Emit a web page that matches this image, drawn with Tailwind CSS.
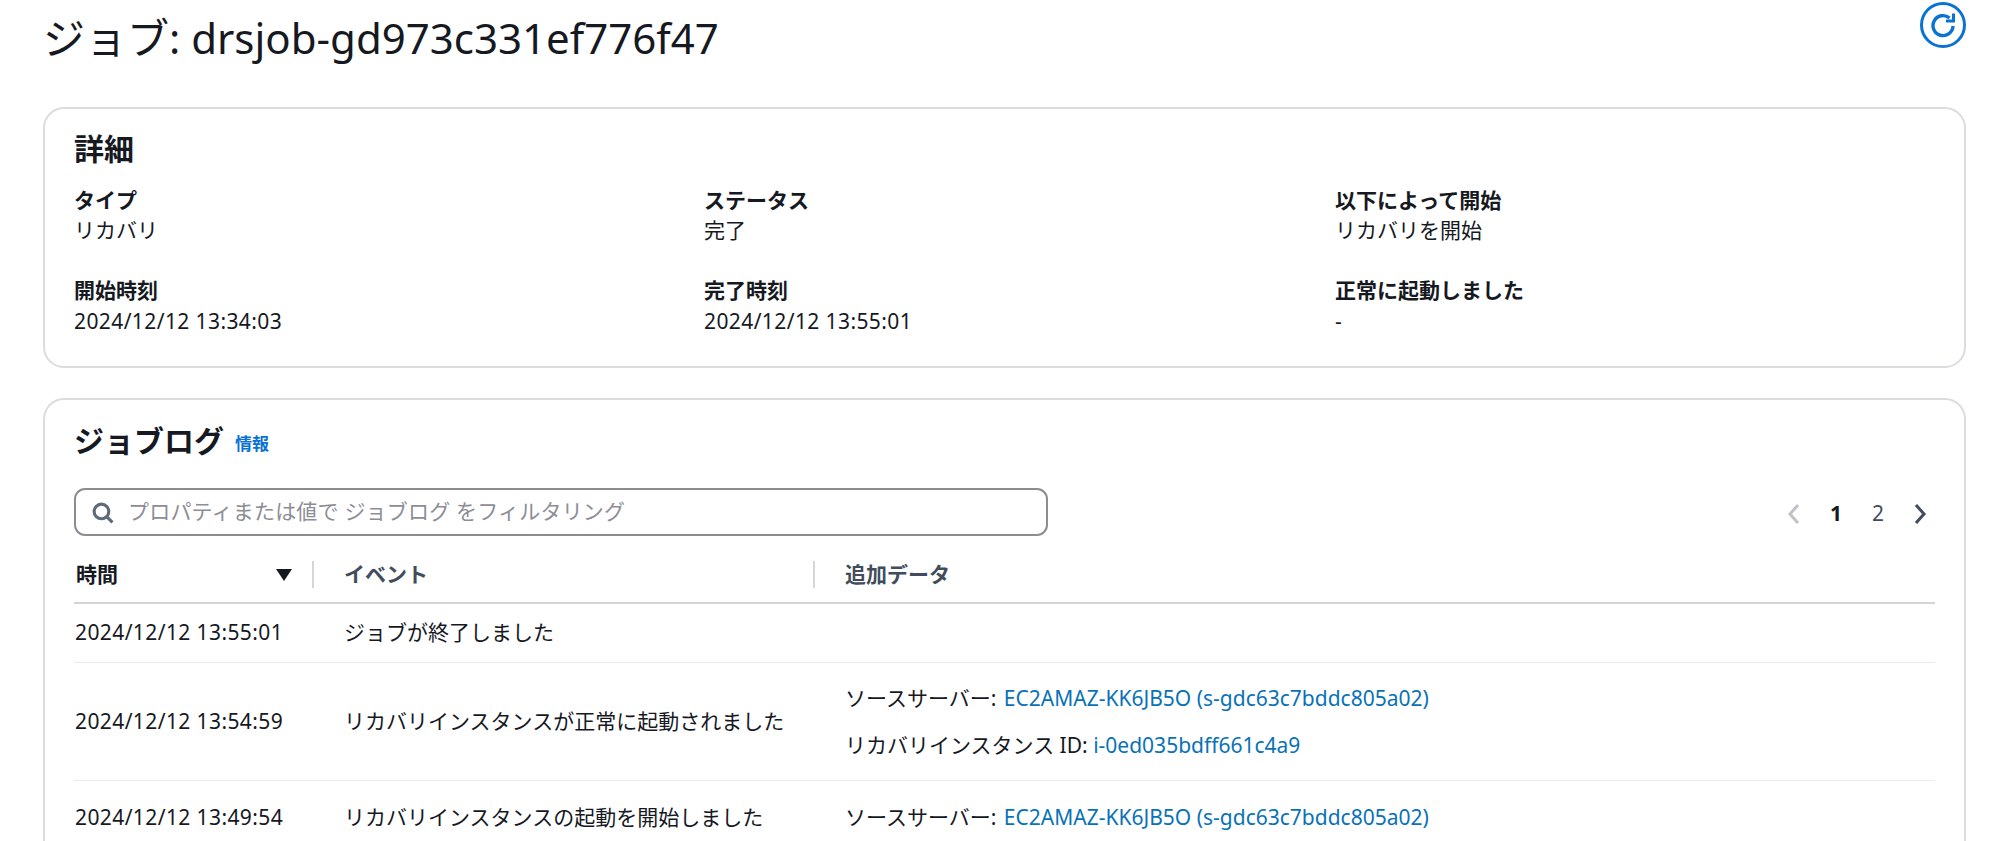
<!DOCTYPE html>
<html lang="ja">
<head>
  <meta charset="UTF-8">
  <title>ジョブ</title>
  <script src="https://cdn.jsdelivr.net/npm/@tailwindcss/browser@4"></script>
</head>
<body class="bg-white h-screen overflow-hidden text-[#16191f] font-['Noto_Sans','Noto_Sans_CJK_JP',sans-serif]">
  <div class="pl-[43px] pr-[34px]">
    <!-- Header -->
    <div class="flex justify-between h-[107px]">
      <h1 class="text-[42px] leading-[54px] pt-[11px]">ジョブ: drsjob-gd973c331ef776f47</h1>
      <button class="w-[46px] h-[46px] mt-[2px] rounded-full border-[3px] border-[#0972d3] flex items-center justify-center">
        <svg class="w-[26px] h-[26px]" viewBox="0 0 26 26" fill="none" stroke="#0972d3" stroke-width="3.4">
          <path d="M23 14a10 10 0 1 1-3.5-8"/>
          <path d="M23.5 1.5v7.5h-7.5" stroke-width="3"/>
        </svg>
      </button>
    </div>

    <!-- 詳細 -->
    <section class="h-[261px] rounded-[21px] border-2 border-[#dcdce0] px-[29px] pt-[22px]">
      <h2 class="text-[30px] leading-[36px] font-bold">詳細</h2>
      <div class="grid grid-cols-[630px_631px_1fr] mt-[19px] text-[21px]">
        <div class="h-[90px]">
          <div class="font-bold leading-[28px]">タイプ</div>
          <div class="leading-[32px]">リカバリ</div>
        </div>
        <div>
          <div class="font-bold leading-[28px]">ステータス</div>
          <div class="leading-[32px]">完了</div>
        </div>
        <div>
          <div class="font-bold leading-[28px]">以下によって開始</div>
          <div class="leading-[32px]">リカバリを開始</div>
        </div>
        <div>
          <div class="font-bold leading-[28px]">開始時刻</div>
          <div class="leading-[32px] mt-[1px] tracking-[0.4px]">2024/12/12 13:34:03</div>
        </div>
        <div>
          <div class="font-bold leading-[28px]">完了時刻</div>
          <div class="leading-[32px] mt-[1px] tracking-[0.4px]">2024/12/12 13:55:01</div>
        </div>
        <div>
          <div class="font-bold leading-[28px]">正常に起動しました</div>
          <div class="leading-[32px] mt-[1px]">-</div>
        </div>
      </div>
    </section>

    <!-- ジョブログ -->
    <section class="mt-[30px] h-[443px] rounded-t-[21px] border-2 border-b-0 border-[#dcdce0] px-[29px] pt-[21px]">
      <div class="flex items-center gap-[11px] h-[40px]">
        <h2 class="text-[30px] font-bold leading-[40px]">ジョブログ</h2>
        <a class="text-[17px] font-bold text-[#0972d3] mt-[5px]">情報</a>
      </div>
      <div class="flex items-center justify-between mt-[27px]">
        <div class="w-[974px] h-[48px] rounded-[11px] border-2 border-[#8c8c94] flex items-center pl-[15px] gap-[14px]">
          <svg class="w-[23px] h-[23px]" viewBox="0 0 22 22" fill="none" stroke="#5f6b7a" stroke-width="3">
            <circle cx="10" cy="10" r="7"/>
            <path d="M15 15l5.5 5.5"/>
          </svg>
          <span class="text-[21px] tracking-[0.2px] text-[#8d8d96]">プロパティまたは値で ジョブログ をフィルタリング</span>
        </div>
        <div class="flex items-center mr-[8px] mt-[3px]">
          <svg class="w-[14px] h-[22px]" viewBox="0 0 14 22" fill="none" stroke="#c1c1c8" stroke-width="3"><path d="M11 2l-8 9 8 9"/></svg>
          <span class="ml-[27px] text-[21px] font-bold w-[16px] text-center">1</span>
          <span class="ml-[26px] text-[21px] text-[#414d5c] w-[16px] text-center">2</span>
          <svg class="ml-[27px] w-[14px] h-[22px]" viewBox="0 0 14 22" fill="none" stroke="#414d5c" stroke-width="3"><path d="M3 2l8 9-8 9"/></svg>
        </div>
      </div>

      <!-- Table -->
      <div class="mt-[17px] text-[21px]">
        <div class="grid grid-cols-[270px_471px_1fr] h-[51px] border-b-2 border-[#d1d5db] items-start font-bold text-[#414d5c]">
          <div class="flex items-center justify-between h-[27px] mt-[8px] border-r-2 border-[#d5d5da] pl-[2px] pr-[20px] text-[#16191f] w-[240px]">
            時間
            <svg class="w-[16px] h-[12px]" viewBox="0 0 16 12" fill="#16191f"><path d="M0 0h16l-8 12z"/></svg>
          </div>
          <div class="flex items-center h-[27px] mt-[8px] border-r-2 border-[#d5d5da]">イベント</div>
          <div class="flex items-center h-[27px] mt-[8px] pl-[30px]">追加データ</div>
        </div>
        <div class="grid grid-cols-[270px_501px_1fr] h-[59px] border-b border-[#e9ebed] items-center">
          <div class="pl-[1px] tracking-[0.4px]">2024/12/12 13:55:01</div>
          <div>ジョブが終了しました</div>
          <div></div>
        </div>
        <div class="grid grid-cols-[270px_501px_1fr] h-[118px] border-b border-[#e9ebed] items-center">
          <div class="pl-[1px] tracking-[0.4px]">2024/12/12 13:54:59</div>
          <div>リカバリインスタンスが正常に起動されました</div>
          <div class="leading-[47px]">
            <div>ソースサーバー: <a class="ml-[2px] text-[#0972b8]">EC2AMAZ-KK6JB5O (s-gdc63c7bddc805a02)</a></div>
            <div>リカバリインスタンス ID: <a class="text-[#0972b8]">i-0ed035bdff661c4a9</a></div>
          </div>
        </div>
        <div class="grid grid-cols-[270px_501px_1fr] pt-[21px] items-center">
          <div class="pl-[1px] tracking-[0.4px]">2024/12/12 13:49:54</div>
          <div>リカバリインスタンスの起動を開始しました</div>
          <div>ソースサーバー: <a class="ml-[2px] text-[#0972b8]">EC2AMAZ-KK6JB5O (s-gdc63c7bddc805a02)</a></div>
        </div>
      </div>
    </section>
  </div>
</body>
</html>
